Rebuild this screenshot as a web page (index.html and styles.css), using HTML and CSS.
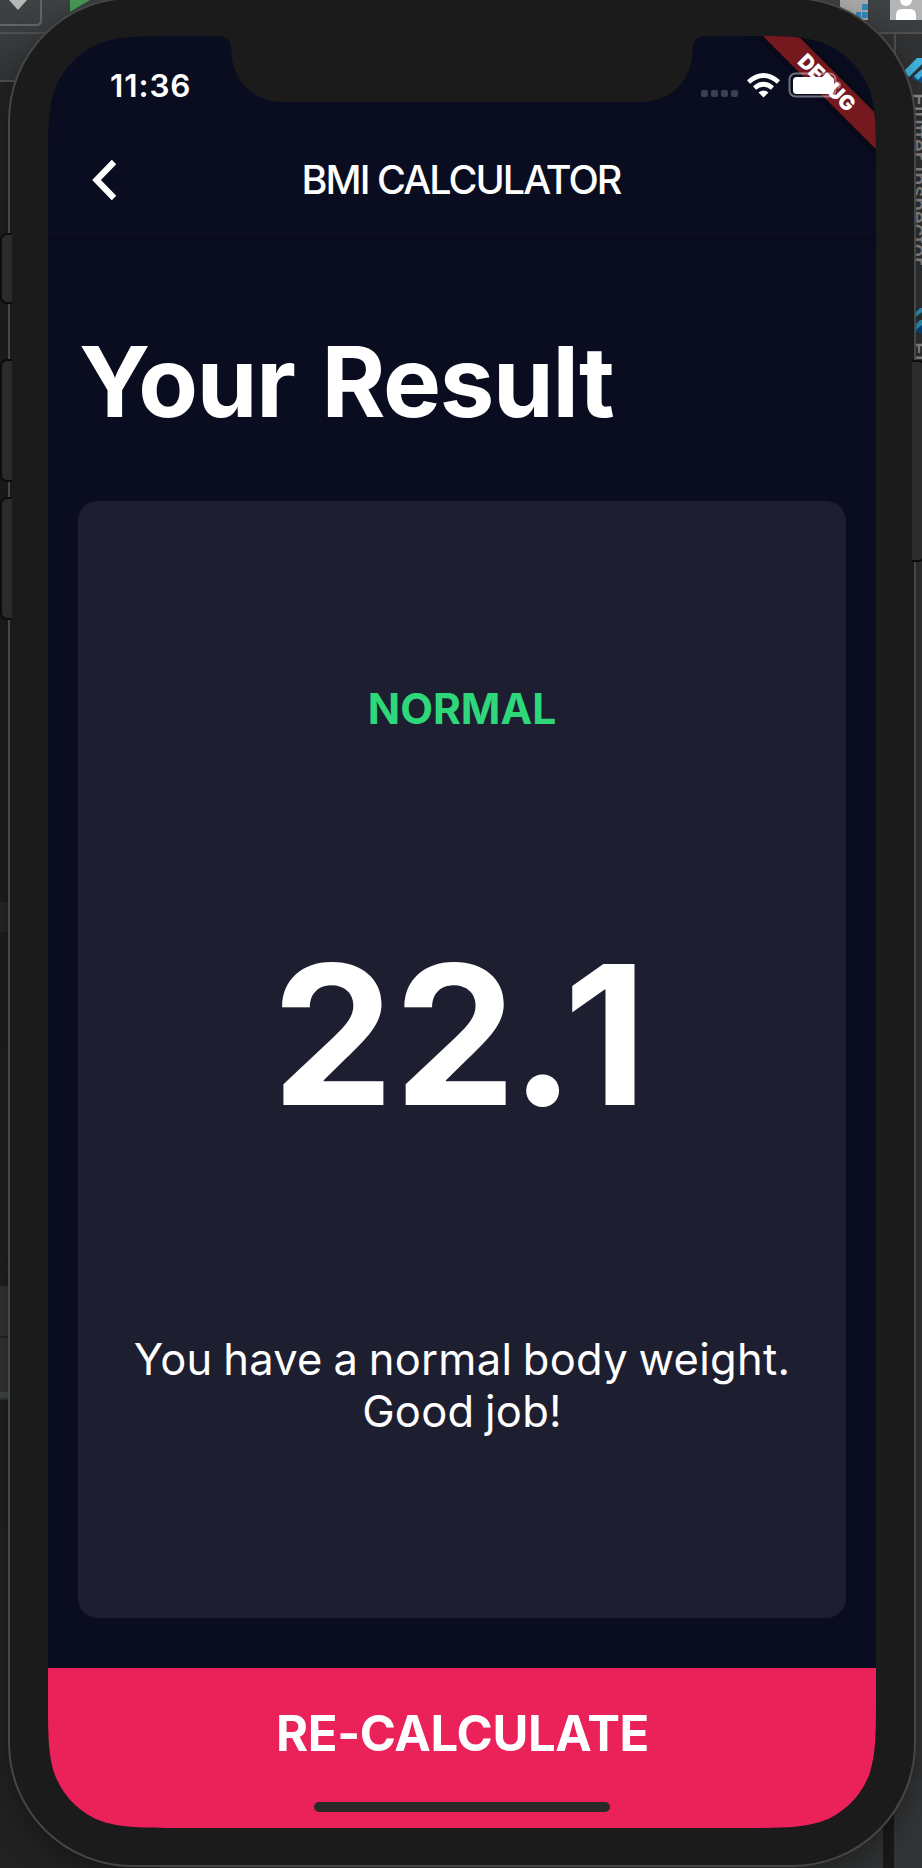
FILE: index.html
```html
<!DOCTYPE html>
<html lang="en">
<head>
<meta charset="utf-8">
<title>BMI Calculator</title>
<link rel="stylesheet" href="styles.css">
</head>
<body>
<div class="desktop">
  <svg class="backdrop" width="922" height="1868" viewBox="0 0 922 1868">
    <defs>
      <linearGradient id="bar" x1="0" y1="0" x2="0" y2="1"><stop offset="0" stop-color="#3e4244"/><stop offset="1" stop-color="#303436"/></linearGradient>
      <linearGradient id="left" x1="0" y1="0" x2="0" y2="1"><stop offset="0" stop-color="#242424"/><stop offset=".25" stop-color="#1c1c1c"/><stop offset="1" stop-color="#222"/></linearGradient>
    </defs>
    <rect width="922" height="1868" fill="url(#left)"/>
    <rect width="922" height="80" fill="url(#bar)"/>
    <rect x="800" y="34" width="122" height="1834" fill="#303233"/>
    <path d="M0 33H922M0 81H40M895 33V100" stroke="#505050" stroke-width="2" fill="none"/>
    <path d="M0 25H36Q41 25 41 20V0" stroke="#626466" stroke-width="2" fill="none"/>
    <path d="M9 0H27L18 10Z" fill="#b8b8b8"/>
    <path d="M70 0H90L70 12Z" fill="#499c54"/>
    <rect x="840" y="0" width="28" height="20" fill="#aaa"/>
    <path d="M862 4h6v6h-6zM862 12h6v6h-6zM856 12h5v6h-5z" fill="#3488bd"/>
    <rect x="890" y="0" width="32" height="20" fill="#b5b5b5"/>
    <circle cx="906" cy="0" r="6" fill="#fff"/>
    <path d="M896 20V15Q896 9 902 9H910Q916 9 916 15V20Z" fill="#fff"/>
    <path d="M922 58H917L904 71L909 77L922 64Z" fill="#40b6e0"/>
    <path d="M922 69L912 78L922 83Z" fill="#0d5196"/>
    <path d="M922 69L914 76L918 80L922 76Z" fill="#40b6e0"/>
    <path d="M922 308H920L912 316V320L922 312M922 320H920L912 328L916 332L922 326Z" fill="#3193b4"/>
    <path d="M916 330L922 325V334H919Z" fill="#0d4479"/>
    <path d="M0 902H9V932H0Z" fill="#262626"/>
    <path d="M0 1286H9V1400H0Z" fill="#303334"/>
    <path d="M0 1392H9V1398H0Z" fill="#414648"/>
    <path d="M0 1337H9" stroke="#232323" stroke-width="2"/>
    <path d="M160 1867H883V1780H922V1868H160Z" fill="#323436"/>
    <path d="M883 1800H894V1868H883Z" fill="#191919"/>
  </svg>
  <span class="tool-label">Flutter Inspector</span>
  <span class="tool-label second">Fl</span>

  <div class="phone">
    <i class="key mute"></i><i class="key up"></i><i class="key down"></i><i class="key power"></i>
    <main class="screen">
      <header class="status">
        <span class="clock">11:36</span>
        <svg class="signals" width="150" height="30" viewBox="0 0 150 30">
          <g fill="#3c3f4e"><rect x="1" y="18" width="7" height="7" rx="2"/><rect x="11" y="18" width="7" height="7" rx="2"/><rect x="21" y="18" width="7" height="7" rx="2"/><rect x="31" y="18" width="7" height="7" rx="2"/></g>
          <g fill="none" stroke="#fff" stroke-width="4.6"><path d="M48.500 10Q63.500 -3 78.500 10"/><path d="M54.500 16Q63.500 8.500 72.500 16"/></g>
          <path d="M58.500 20.500Q63.500 16.500 68.500 20.500L63.500 25.500Z" fill="#fff"/>
        </svg>
      </header>
      <nav class="appbar">
        <svg class="back" width="26" height="42" viewBox="0 0 26 42"><path d="M22 3L4.500 21L22 39" fill="none" stroke="#fff" stroke-width="6.200"/></svg>
        <h1 class="title">BMI CALCULATOR</h1>
      </nav>
      <h2 class="heading">Your Result</h2>
      <section class="card">
        <p class="grade">NORMAL</p>
        <p class="score"><span>22</span><span class="point">.</span><span class="tenths">1</span></p>
        <p class="advice">You have a normal body weight.<br>Good job!</p>
      </section>
      <button class="again">RE-CALCULATE</button>
      <div class="home"></div>
      <div class="banner">DEBUG</div>
      <svg class="battery" width="56" height="28" viewBox="0 0 56 28">
        <rect x="1.500" y="1.500" width="46" height="23" rx="6" fill="none" stroke="#fff" stroke-opacity=".42" stroke-width="2"/>
        <rect x="5" y="5" width="41" height="17" rx="3.500" fill="#fff"/>
        <path d="M49.500 9Q53 10 53 13T49.500 17Z" fill="#fff" opacity=".4"/>
      </svg>
    </main>
  </div>
</div>
</body>
</html>
```
FILE: styles.css
```css
* { box-sizing: border-box; margin: 0; padding: 0; }
body { width: 922px; height: 1868px; overflow: hidden; background: #202020; font-family: Inter, "Liberation Sans", sans-serif; color: #fff; }
.desktop { position: relative; width: 922px; height: 1868px; overflow: hidden; }
.backdrop { position: absolute; inset: 0; }
.tool-label { position: absolute; left: 908px; top: 93px; writing-mode: vertical-rl; font-size: 22px; line-height: 22px; font-weight: 500; color: #8c8c8c; white-space: nowrap; }
.tool-label.second { top: 342px; }
.phone { position: absolute; left: 8px; top: -3px; width: 908px; height: 1870px; padding: 37px 38px; border: 2px solid #464646; border-radius: 124px; background: #1b1b1b; box-shadow: 0 10px 30px rgba(0,0,0,.35); }
.key { position: absolute; width: 12px; background: #2b2b2b; border: 2px solid #0c0c0c; }
.mute, .up, .down { left: -10px; border-right: 0; border-radius: 7px 0 0 7px; }
.mute { top: 234px; height: 71px; }
.up { top: 360px; height: 123px; }
.down { top: 498px; height: 123px; }
.power { left: 902px; top: 361px; height: 202px; border-left: 0; border-radius: 0 5px 5px 0; }
.screen { position: relative; display: flex; flex-direction: column; width: 828px; height: 1792px; background: #0a0d20;
  clip-path: path("M0 131.500C0 93.600 0 74.700 6.400 54.300C14.500 32.100 32.100 14.500 54.300 6.400C74.700 0 93.600 0 131.500 0H170C179 0 183.500 5 183.500 14C183.500 44 205 66 235 66H593C623 66 644.500 44 644.500 14C644.500 5 649 0 658 0H696.500C734.400 0 753.300 0 773.700 6.400C795.900 14.500 813.500 32.100 821.600 54.300C828 74.700 828 93.600 828 131.500V1660.500C828 1698.400 828 1717.300 821.600 1737.700C813.500 1759.900 795.900 1777.500 773.700 1785.600C753.300 1792 734.400 1792 696.500 1792H131.500C93.600 1792 74.700 1792 54.300 1785.600C32.100 1777.500 14.500 1759.900 6.400 1737.700C0 1717.300 0 1698.400 0 1660.500Z"); }
.status { display: flex; justify-content: space-between; height: 88px; padding: 35px 26px 0 62px; }
.clock { font-size: 31.500px; line-height: 30px; font-weight: 600; letter-spacing: .9px; }
.status .signals { margin-top: 1px; }
.appbar { display: flex; align-items: center; height: 112px; padding-left: 44px; box-shadow: 0 2px 8px rgba(0,0,0,.25); clip-path: inset(0 0 -14px 0); }
.title { flex: 1; padding-right: 72px; text-align: center; font-size: 39.500px; line-height: 48px; font-weight: 500; letter-spacing: -1.950px; }
.heading { height: 265px; padding: 87px 0 0 31px; font-size: 97.500px; line-height: 118px; font-weight: 700; letter-spacing: -1.300px; word-spacing: 5px; white-space: nowrap; }
.card { display: flex; flex-direction: column; align-items: center; height: 1117px; margin: 0 30px 50px; padding-top: 182px; border-radius: 20px; background: #1e1e31; text-align: center; }
.grade { height: 52px; font-size: 42.500px; line-height: 52px; font-weight: 700; color: #2ed87a; }
.score { display: flex; margin-top: 182px; padding-right: 5px; font-size: 194px; line-height: 236px; font-weight: 700; }
.point { margin-left: -6px; }
.tenths { margin-left: -11.500px; }
.advice { margin-top: 180px; font-size: 43.500px; line-height: 52px; letter-spacing: .25px; word-spacing: -1.800px; white-space: nowrap; }
.again { height: 160px; padding: 2px 0 30px 1px; border: 0; background: #ea2259; color: #fff; font: 700 49px/60px Inter, sans-serif; letter-spacing: -.35px; }
.home { position: absolute; left: 266px; top: 1766px; width: 296px; height: 10px; border-radius: 5px; background: #292929; }
.banner { position: absolute; left: 659px; top: 34px; width: 240px; height: 25px; background: #75191f; transform: rotate(45deg); font-size: 20.500px; line-height: 25px; font-weight: 900; text-align: center; box-shadow: 0 0 12px rgba(0,0,0,.5); }
.battery { position: absolute; left: 740px; top: 36px; }
```
